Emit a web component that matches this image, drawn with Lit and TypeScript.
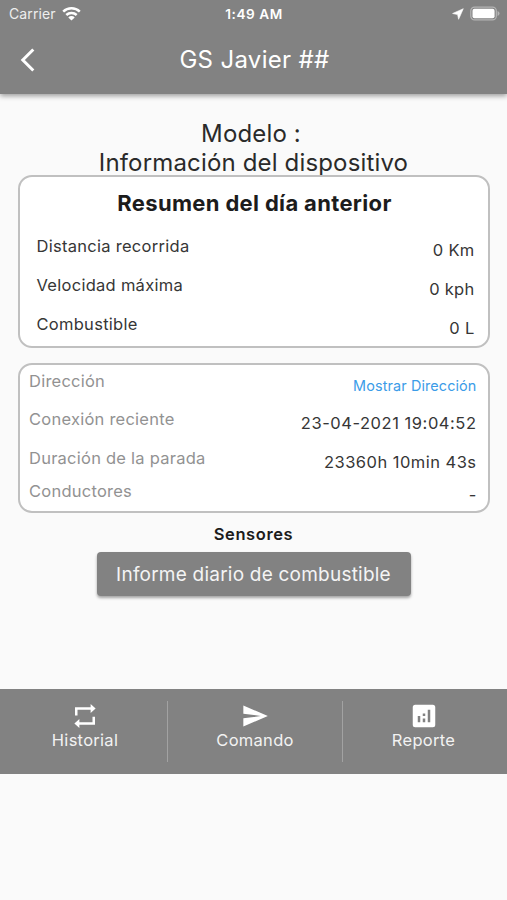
import { LitElement, html, css } from "lit";
import { customElement } from "lit/decorators.js";

@customElement("app-root")
class AppRoot extends LitElement {
  static styles = css`
    :host { display: flex; flex-direction: column; height: 900px; background: #fafafa; color: #2a2a2a; font-family: Inter, "Liberation Sans", sans-serif; overflow: hidden; white-space: nowrap; font-size: 16.5px; letter-spacing: 0.28px; line-height: 20px; }
    * { box-sizing: border-box; }
    svg { display: block; flex: none; }
    header { height: 94px; flex: none; background: #828282; color: #fff; box-shadow: 0 2px 5px rgba(0,0,0,.38); }
    .status { height: 28px; display: grid; grid-template-columns: 1fr auto 1fr; align-items: center; padding: 0 7px 0 9px; }
    .left { display: flex; align-items: center; gap: 6px; font-size: 14px; letter-spacing: 0.1px; color: #eee; }
    .left svg { margin-bottom: 2px; }
    .time { font-size: 13.6px; font-weight: 600; letter-spacing: 0.55px; padding-right: 1px; }
    .right { display: flex; align-items: center; justify-content: flex-end; gap: 6px; padding-bottom: 1px; }
    .nav { height: 64px; display: grid; grid-template-columns: 60px 1fr 58px; align-items: center; }
    .nav svg { margin-left: 20px; }
    .title { text-align: center; font-size: 24px; letter-spacing: 0.32px; line-height: 30px; }
    .intro { padding-top: 25px; height: 81px; flex: none; text-align: center; font-size: 24px; line-height: 29.3px; letter-spacing: 0.16px; }
    .model { padding-right: 5px; letter-spacing: 0.15px; }
    .card { margin: 0 17px 0 17.5px; border: 2px solid #c0c0c0; border-radius: 14px; background: #fff; flex: none; color: #363636; }
    .summary { height: 173px; padding: 11px 13.5px 0 17px; }
    .details { height: 150px; margin-top: 15px; padding: 6px 11.5px 0 9.5px; }
    h2 { margin: 0; font-size: 22px; line-height: 30px; letter-spacing: 0.34px; font-weight: 700; color: #1c1c1c; text-align: center; padding-right: 2px; }
    .row { display: flex; justify-content: space-between; height: 39.2px; }
    .summary .row:nth-child(2) { margin-top: 18px; }
    .value { padding-top: 4px; }
    .details .row { height: 38px; }
    .details .row:nth-child(2) { height: 39px; }
    .details .row:nth-child(3) { height: 33px; }
    .details .label { color: #929292; letter-spacing: 0.24px; }
    .date { letter-spacing: 0.54px; }
    .dur { letter-spacing: 0.47px; }
    .details .link { color: #3b9ce8; font-size: 14.4px; letter-spacing: 0.12px; padding-top: 5px; }
    .sensors { margin-top: 10.5px; text-align: center; font-weight: 600; letter-spacing: 0.6px; color: #1c1c1c; }
    .button { align-self: center; width: 314px; height: 44px; margin-top: 8.5px; border-radius: 4px; background: #828282; color: #f4f4f4; font-size: 19px; letter-spacing: 0.22px; line-height: 45px; text-align: center; box-shadow: 0 2px 3px rgba(0,0,0,.35); flex: none; }
    .tabs { margin-top: 92.5px; height: 85px; flex: none; background: #828282; color: #f2f2f2; display: grid; grid-template-columns: 167px 1px 174px 1px 1fr; }
    .tab { display: flex; flex-direction: column; align-items: center; padding-top: 12px; }
    .tab.first { padding-left: 3px; }
    .tab.last { padding-right: 3px; }
    .tab svg { height: 30px; margin-bottom: -1px; }
    .divider { height: 61px; margin-top: 12px; background: #a2a2a2; }
  `;
  render() {
    return html`
      <header>
        <div class="status">
          <div class="left"><span>Carrier</span>
            <svg width="19" height="15" viewBox="0 0 19 15" fill="none" stroke="#fff" stroke-width="2.5"><path d="M1.2 5.700a12 12 0 0 1 16.600 0M4.300 9a7.600 7.600 0 0 1 10.400 0"/><path d="M6.300 11.400a4.600 4.600 0 0 1 6.400 0L9.500 14.600z" fill="#fff" stroke="none"/></svg>
          </div>
          <div class="time">1:49 AM</div>
          <div class="right">
            <svg width="12" height="12" viewBox="0 0 12 12"><path d="M11.300.7 6.600 11.300 5.600 6.600.6 5.500z" fill="#fff" stroke="#fff" stroke-width=".6"/></svg>
            <svg width="30" height="15" viewBox="0 0 31 15"><rect x=".8" y=".8" width="26.4" height="13.4" rx="4" fill="none" stroke="#b4b4b4" stroke-width="1.3"/><rect x="2.6" y="2.7" width="22.8" height="9.6" rx="2" fill="#fff"/><path d="M28.500 5q2 .7 2 2.500t-2 2.500z" fill="#b4b4b4"/></svg>
          </div>
        </div>
        <div class="nav">
          <svg width="16" height="26" viewBox="0 0 16 26"><path d="M13.300 2.500 2.800 13l10.500 10.500" fill="none" stroke="#fff" stroke-width="3"/></svg>
          <div class="title">GS Javier ##</div>
        </div>
      </header>
      <div class="intro"><div class="model">Modelo :</div><div>Información del dispositivo</div></div>
      <section class="card summary">
        <h2>Resumen del día anterior</h2>
        <div class="row"><span>Distancia recorrida</span><span class="value">0 Km</span></div>
        <div class="row"><span>Velocidad máxima</span><span class="value">0 kph</span></div>
        <div class="row"><span>Combustible</span><span class="value">0 L</span></div>
      </section>
      <section class="card details">
        <div class="row"><span class="label">Dirección</span><span class="value link">Mostrar Dirección</span></div>
        <div class="row"><span class="label">Conexión reciente</span><span class="value date">23-04-2021 19:04:52</span></div>
        <div class="row"><span class="label">Duración de la parada</span><span class="value dur">23360h 10min 43s</span></div>
        <div class="row"><span class="label">Conductores</span><span class="value">-</span></div>
      </section>
      <div class="sensors">Sensores</div>
      <div class="button">Informe diario de combustible</div>
      <nav class="tabs">
        <div class="tab first"><svg width="30" height="30" viewBox="0 0 24 24" fill="#fff"><path d="M6 7h10.500v2.600L20.500 6l-4-3.600V5H4v6.500h2zm12 10H7.500v-2.600L3.500 18l4 3.600V19H20v-6.500h-2z"/></svg><span>Historial</span></div>
        <div class="divider"></div>
        <div class="tab"><svg width="28" height="30" viewBox="0 0 24 24" fill="#fff"><path d="M2.010 21 23 12 2.010 3 2 10l15 2-15 2z"/></svg><span>Comando</span></div>
        <div class="divider"></div>
        <div class="tab last"><svg width="30" height="30" viewBox="0 0 24 24" fill="#fff"><path fill-rule="evenodd" d="M19 3H5a2 2 0 0 0-2 2v14a2 2 0 0 0 2 2h14a2 2 0 0 0 2-2V5a2 2 0 0 0-2-2zM9 17H7v-5h2zm4 0h-2v-3h2zm0-5h-2v-2h2zm4 5h-2V7h2z"/></svg><span>Reporte</span></div>
      </nav>`;
  }
}
